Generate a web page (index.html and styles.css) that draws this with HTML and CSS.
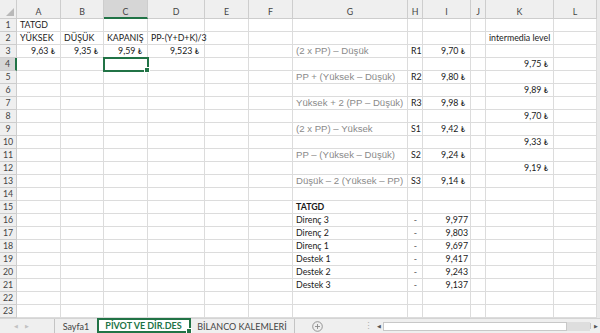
FILE: index.html
```html
<!DOCTYPE html>
<html>

<head>
    <title>PİVOT VE DİR.DES</title>
    <meta charset="utf-8">

    <link rel="stylesheet" href="styles.css">
</head>

<body>
    <div class="sheet">
        <div class="grid" id="grid"></div>
    </div>

    <div class="tabbar">
        <div class="tab-nav">
            <span class="nav-arrow">◀</span>
            <span class="nav-arrow">▶</span>
        </div>
        <div class="tab">Sayfa1</div>
        <div class="tab active">PİVOT VE DİR.DES</div>
        <div class="tab">BİLANCO KALEMLERİ</div>
        <div class="add-sheet">
            <svg width="11" height="11" viewBox="0 0 11 11">
                <circle cx="5.5" cy="5.5" r="4.8" fill="none" stroke="#8a8a8a" stroke-width="0.9"/>
                <path d="M5.5 3v5M3 5.5h5" stroke="#8a8a8a" stroke-width="0.9"/>
            </svg>
        </div>
        <div class="split-dots">⋮</div>
        <div class="hscroll">
            <span class="hs-arrow">◀</span>
            <div class="hs-thumb"></div>
            <div class="hs-track"></div>
            <span class="hs-arrow hs-right">▶</span>
        </div>
    </div>

    <script>
        // sheet contents: row -> column -> [text, classes]
        const columns = ['A', 'B', 'C', 'D', 'E', 'F', 'G', 'H', 'I', 'J', 'K', 'L'];
        const cells = {
            1: { A: ['TATGD'] },
            2: { A: ['YÜKSEK'], B: ['DÜŞÜK'], C: ['KAPANIŞ'], D: ['PP-(Y+D+K)/3'], K: ['intermedia level'] },
            3: { A: ['9,63 ₺', 'num'], B: ['9,35 ₺', 'num'], C: ['9,59 ₺', 'num'], D: ['9,523 ₺', 'num'],
                 G: ['(2 x PP) – Düşük', 'formula'], H: ['R1'], I: ['9,70 ₺', 'num'] },
            4: { K: ['9,75 ₺', 'num'] },
            5: { G: ['PP + (Yüksek – Düşük)', 'formula'], H: ['R2'], I: ['9,80 ₺', 'num'] },
            6: { K: ['9,89 ₺', 'num'] },
            7: { G: ['Yüksek + 2 (PP – Düşük)', 'formula'], H: ['R3'], I: ['9,98 ₺', 'num'] },
            8: { K: ['9,70 ₺', 'num'] },
            9: { G: ['(2 x PP) – Yüksek', 'formula'], H: ['S1'], I: ['9,42 ₺', 'num'] },
            10: { K: ['9,33 ₺', 'num'] },
            11: { G: ['PP – (Yüksek – Düşük)', 'formula'], H: ['S2'], I: ['9,24 ₺', 'num'] },
            12: { K: ['9,19 ₺', 'num'] },
            13: { G: ['Düşük – 2 (Yüksek – PP)', 'formula'], H: ['S3'], I: ['9,14 ₺', 'num'] },
            15: { G: ['TATGD', 'bold'] },
            16: { G: ['Direnç 3'], H: ['-', 'dash'], I: ['9,977', 'plain-num'] },
            17: { G: ['Direnç 2'], H: ['-', 'dash'], I: ['9,803', 'plain-num'] },
            18: { G: ['Direnç 1'], H: ['-', 'dash'], I: ['9,697', 'plain-num'] },
            19: { G: ['Destek 1'], H: ['-', 'dash'], I: ['9,417', 'plain-num'] },
            20: { G: ['Destek 2'], H: ['-', 'dash'], I: ['9,243', 'plain-num'] },
            21: { G: ['Destek 3'], H: ['-', 'dash'], I: ['9,137', 'plain-num'] }
        };
        const activeCol = 'C';
        const activeRow = 4;

        const grid = document.getElementById('grid');

        function addCell(className, text) {
            const cell = document.createElement('div');
            cell.className = className;
            if (text && text.endsWith(' ₺')) {
                // lira sign is drawn a bit smaller than the digits
                cell.textContent = text.slice(0, -1);
                const cur = document.createElement('span');
                cur.className = 'cur';
                cur.textContent = '₺';
                cell.appendChild(cur);
            } else if (text) {
                cell.textContent = text;
            }
            grid.appendChild(cell);
            return cell;
        }

        // column headers
        addCell('corner');
        columns.forEach(col => {
            addCell(col === activeCol ? 'col-head selected' : 'col-head', col);
        });

        // rows
        for (let row = 1; row <= 23; row++) {
            addCell(row === activeRow ? 'row-head selected' : 'row-head', String(row));
            const rowData = cells[row] || {};
            columns.forEach(col => {
                const entry = rowData[col];
                let cls = 'cell';
                if (entry && entry[1]) cls += ' ' + entry[1];
                if (col === activeCol && row === activeRow) cls += ' active';
                addCell(cls, entry ? entry[0] : '');
            });
        }
    </script>
</body>

</html>
```

FILE: styles.css
```css
:root {
    --grid_line: #dcdcdc;
    --head_bg: #efefef;
    --head_line: #cdcdcd;
    --excel_green: #217346;
    --text_color: #1a1a1a;
}

body {
    margin: 0px;
    background: #e9e9e9;
    font-family: Lato, "Liberation Sans", sans-serif;
    color: var(--text_color);
    width: 600px;
    height: 333px;
    overflow: hidden;
}

.sheet {
    width: 597px;
    background: white;
}

.grid {
    display: grid;
    grid-template-columns: 17px 44px 43px 44px 57px 44px 44px 115px 15px 48px 15px 68px 43px;
    grid-template-rows: 19px repeat(23, 13px);
}

.grid > div {
    box-sizing: border-box;
    white-space: nowrap;
    font-size: 8.8px;
    line-height: 12px;
}

.corner {
    background: var(--head_bg);
    border-right: 1px solid var(--head_line);
    border-bottom: 1px solid var(--head_line);
    position: relative;
}

.corner::after {
    content: "";
    position: absolute;
    right: 2px;
    bottom: 2px;
    border-left: 8px solid transparent;
    border-bottom: 8px solid #b9b9b9;
}

.col-head {
    background: var(--head_bg);
    border-right: 1px solid var(--head_line);
    border-bottom: 1px solid var(--head_line);
    text-align: center;
    padding-top: 6px;
    color: #444;
}

.row-head {
    background: var(--head_bg);
    border-right: 1px solid var(--head_line);
    border-bottom: 1px solid var(--head_line);
    text-align: center;
    color: #444;
}

.col-head.selected {
    background: #d6d6d6;
    border-bottom: 2px solid var(--excel_green);
}

.row-head.selected {
    background: #d6d6d6;
    border-right: 2px solid var(--excel_green);
}

.cell {
    border-right: 1px solid var(--grid_line);
    border-bottom: 1px solid var(--grid_line);
    padding: 0 2px 0 3px;
}

.num {
    text-align: right;
    padding-right: 5px;
}

.cur {
    font-size: 7.5px;
}

.plain-num {
    text-align: right;
    padding-right: 2px;
}

.dash {
    text-align: center;
    color: #555;
}

.bold {
    font-weight: bold;
}

.grid > .formula {
    font-family: "Liberation Sans", Arial, sans-serif;
    font-size: 9.6px;
    color: #8a8a8a;
}

.active {
    position: relative;
    outline: 2px solid var(--excel_green);
    outline-offset: -1px;
}

.active::after {
    content: "";
    position: absolute;
    right: -3px;
    bottom: -3px;
    width: 4px;
    height: 4px;
    background: var(--excel_green);
    border: 1px solid white;
}

/* sheet tabs */
.tabbar {
    display: flex;
    height: 15px;
    background: #efefef;
    border-top: 1px solid #d4d4d4;
    box-sizing: border-box;
    font-size: 9px;
    color: #444;
}

.tab-nav {
    width: 55px;
    display: flex;
    align-items: center;
    gap: 7px;
    padding-left: 14px;
    box-sizing: border-box;
    border-right: 1px solid #c4c4c4;
}

.nav-arrow {
    font-size: 5px;
    color: #c2c2c2;
}

.tab {
    display: flex;
    align-items: center;
    justify-content: center;
    border-right: 1px solid #c4c4c4;
    box-sizing: border-box;
}

.tab:nth-child(2) {
    width: 43px;
}

.tab.active {
    width: 92px;
    background: white;
    color: var(--excel_green);
    font-weight: bold;
    border-bottom: 2px solid var(--excel_green);
    padding-top: 1px;
}

.tab:nth-child(4) {
    width: 105px;
}

.add-sheet {
    display: flex;
    align-items: center;
    margin-left: 17px;
}

.split-dots {
    margin-left: 41px;
    width: 8px;
    color: #b0b0b0;
    font-size: 9px;
    line-height: 14px;
}

.hscroll {
    margin-left: 2px;
    flex: 1;
    display: flex;
    align-items: center;
}

.hs-arrow {
    width: 9px;
    font-size: 5px;
    color: #555;
    text-align: center;
}

.hs-thumb {
    width: 184px;
    height: 9px;
    background: white;
    border: 1px solid #c8c8c8;
    box-sizing: border-box;
}

.hs-track {
    flex: 1;
    height: 9px;
    background: #dedede;
}

.hs-right {
    border-left: 1px solid #c8c8c8;
}
```
